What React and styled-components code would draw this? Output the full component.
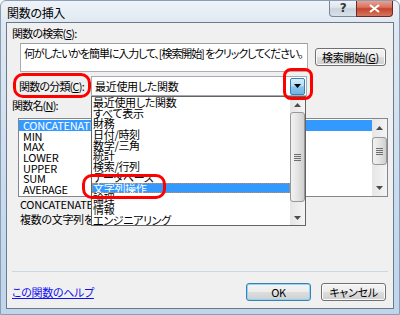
import React from 'react';
import styled, { createGlobalStyle } from 'styled-components';

const GlobalStyle = createGlobalStyle`
  html, body {
    margin: 0;
    padding: 0;
    background: #ffffff;
  }
  body {
    font-family: 'Noto Sans CJK JP', 'Noto Sans', sans-serif;
    font-size: 11px;
    font-feature-settings: 'palt';
    letter-spacing: -0.3px;
    color: #000;
  }
`;

const Window = styled.div`
  width: 400px;
  height: 315px;
  box-sizing: border-box;
  display: flex;
  flex-direction: column;
  border-radius: 6px 6px 0 0;
  border: 1px solid #8a9db2;
  background: linear-gradient(180deg, #eef3f8 0px, #dfe8f2 22px, #c9dcef 60%, #bfd5ec 100%);
  overflow: hidden;
`;

const TitleBar = styled.div`
  height: 21px;
  display: flex;
  align-items: flex-start;
  padding-left: 6px;
`;

const Title = styled.div`
  font-size: 12px;
  line-height: 14px;
  padding-top: 5px;
`;

const CaptionButtons = styled.div`
  margin-left: auto;
  margin-right: 6px;
  margin-top: -1px;
  display: flex;
`;

const CaptionButton = styled.div`
  width: ${p => p.$w}px;
  height: 17px;
  box-sizing: border-box;
  display: flex;
  align-items: center;
  justify-content: center;
  border: 1px solid ${p => (p.$close ? '#6d2a22' : '#7a8796')};
  border-top: none;
  border-radius: ${p => (p.$close ? '0 0 4px 0' : '0 0 0 4px')};
  margin-left: ${p => (p.$close ? '-1px' : '0')};
  background: ${p =>
    p.$close
      ? 'linear-gradient(180deg, #e9a99c 0%, #d8735f 45%, #c7432c 55%, #d5775f 100%)'
      : 'linear-gradient(180deg, #f2f5f9 0%, #dfe6ee 45%, #c9d3de 55%, #d8e0e8 100%)'};
  color: ${p => (p.$close ? '#fff' : '#333')};
  font-size: 12px;
  font-weight: bold;
  font-family: 'DejaVu Sans', sans-serif;
`;

const Client = styled.div`
  position: relative;
  flex: 1;
  margin: 0 5px 5px 5px;
  border: 1px solid #6a7a8a;
  background: #f0f0f0;
  padding: 0 5px 0 5px;
  display: flex;
  flex-direction: column;
`;

const Label = styled.div`
  height: 13px;
  line-height: 13px;
  letter-spacing: -0.8px;
  margin-top: ${p => p.$mt || 0}px;
  margin-left: ${p => p.$ml || 0}px;
  width: ${p => (p.$w ? `${p.$w}px` : 'auto')};
  flex-shrink: 0;
  white-space: nowrap;
`;

const Row = styled.div`
  display: flex;
  align-items: ${p => p.$align || 'flex-start'};
  margin-top: ${p => p.$mt || 0}px;
  padding-left: ${p => p.$pl || 0}px;
`;

const SearchBox = styled.div`
  width: 288px;
  height: 29px;
  box-sizing: border-box;
  border: 1px solid #abadb3;
  border-top-color: #9aa0a8;
  background: #fff;
  padding: 2px 3px;
  line-height: 14px;
  letter-spacing: -1.1px;
  white-space: nowrap;
  overflow: hidden;
`;

const PushButton = styled.div`
  width: ${p => p.$w}px;
  height: 18px;
  box-sizing: border-box;
  margin-top: ${p => p.$mt || 0}px;
  margin-left: ${p => p.$ml || 0}px;
  border: 1px solid ${p => (p.$primary ? '#3c7fb1' : '#707070')};
  border-radius: 3px;
  display: flex;
  align-items: center;
  justify-content: center;
  line-height: 14px;
  white-space: nowrap;
  background: linear-gradient(180deg, #f4f4f4 0%, #ececec 48%, #dddddd 52%, #cfcfcf 100%);
  box-shadow: ${p =>
    p.$primary ? 'inset 0 0 0 1px #8fd4f7' : 'inset 0 0 0 1px #fbfbfb'};
`;

const ComboWrap = styled.div`
  position: relative;
  width: 216px;
  height: 20px;
  box-sizing: border-box;
  border: 1px solid #a5acb5;
  background: #fff;
  display: flex;
  align-items: center;
`;

const ComboText = styled.div`
  flex: 1;
  padding-left: 3px;
  line-height: 14px;
  white-space: nowrap;
`;

const ComboButton = styled.div`
  width: 15px;
  height: 17px;
  box-sizing: border-box;
  margin-right: 1px;
  border: 1px solid #3c7fb1;
  border-radius: 2px;
  background: linear-gradient(180deg, #d6edfb 0%, #b2dcf5 45%, #86c4ec 55%, #6fb4e3 100%);
  display: flex;
  align-items: center;
  justify-content: center;
`;

const DropList = styled.div`
  position: absolute;
  top: 19px;
  left: -1px;
  width: 215px;
  height: 130px;
  box-sizing: border-box;
  border: 1px solid #646464;
  background: #fff;
  display: flex;
  z-index: 5;
`;

const Items = styled.div`
  flex: 1;
  padding-top: ${p => p.$pt || 0}px;
  overflow: hidden;
`;

const Item = styled.div`
  height: 10.7px;
  line-height: 10.7px;
  padding-left: ${p => p.$pl}px;
  white-space: nowrap;
  box-sizing: border-box;
  background: ${p => (p.$selected ? '#3399ff' : 'transparent')};
  color: ${p => (p.$selected ? '#fff' : '#000')};
  outline: ${p => (p.$focused ? '1px dotted #d98a3a' : 'none')};
  outline-offset: -1px;
`;

const FuncList = styled.div`
  width: 370px;
  height: 79px;
  box-sizing: border-box;
  margin-top: 6px;
  margin-left: 6px;
  border: 1px solid #828790;
  background: #fff;
  display: flex;
`;

const ScrollBar = styled.div`
  width: 15px;
  flex-shrink: 0;
  display: flex;
  flex-direction: column;
  background: linear-gradient(90deg, #e6e6e6 0%, #f4f4f4 100%);
`;

const Arrow = styled.div`
  height: ${p => p.$size}px;
  flex-shrink: 0;
  display: flex;
  align-items: center;
  justify-content: center;
`;

const Thumb = styled.div`
  margin: ${p => p.$mt}px 0 0 0;
  height: ${p => p.$h}px;
  box-sizing: border-box;
  border: 1px solid #979797;
  border-radius: 3px;
  background: linear-gradient(90deg, #f2f2f2 0%, #e4e4e4 50%, #cfcfcf 100%);
  display: flex;
  align-items: center;
  justify-content: center;
  flex-shrink: 0;
`;

const Grip = styled.div`
  width: 7px;
  height: 7px;
  background: repeating-linear-gradient(180deg, #6d6d6d 0px, #6d6d6d 1px, transparent 1px, transparent 2px);
`;

const Filler = styled.div`
  flex: 1;
`;

const Description = styled.div`
  margin-left: 8px;
  margin-top: 0px;
  line-height: 15px;
  white-space: nowrap;
`;

const Separator = styled.div`
  height: 1px;
  margin-top: 44px;
  background: #cbd7e2;
`;

const BottomRow = styled.div`
  display: flex;
  align-items: center;
  margin-top: 11px;
  padding-right: 2px;
`;

const HelpLink = styled.a`
  color: #1010ee;
  text-decoration: underline;
  line-height: 14px;
  margin-right: auto;
`;

const Ring = styled.div`
  position: absolute;
  left: ${p => p.$x}px;
  top: ${p => p.$y}px;
  width: ${p => p.$w}px;
  height: ${p => p.$h}px;
  box-sizing: border-box;
  border: 3px solid #ff0000;
  border-radius: ${p => p.$r || 10}px;
  z-index: 10;
  pointer-events: none;
`;

const Tri = ({ up, color = '#4d4d4d', w = 7, h = 4 }) => (
  <svg width={w} height={h} viewBox={`0 0 ${w} ${h}`}>
    <polygon
      points={up ? `0,${h} ${w / 2},0 ${w},${h}` : `0,0 ${w},0 ${w / 2},${h}`}
      fill={color}
    />
  </svg>
);

const Scroll = ({ arrow, thumbTop, thumbHeight }) => (
  <ScrollBar>
    <Arrow $size={arrow}>
      <Tri up />
    </Arrow>
    <Thumb $mt={thumbTop} $h={thumbHeight}>
      <Grip />
    </Thumb>
    <Filler />
    <Arrow $size={arrow}>
      <Tri />
    </Arrow>
  </ScrollBar>
);

const categories = [
  '最近使用した関数',
  'すべて表示',
  '財務',
  '日付/時刻',
  '数学/三角',
  '統計',
  '検索/行列',
  'データベース',
  '文字列操作',
  '論理',
  '情報',
  'エンジニアリング'
];

const functions = ['CONCATENATE', 'MIN', 'MAX', 'LOWER', 'UPPER', 'SUM', 'AVERAGE'];

export default function App() {
  return (
    <>
      <GlobalStyle />
      <Window>
        <TitleBar>
          <Title>関数の挿入</Title>
          <CaptionButtons>
            <CaptionButton $w={28}>?</CaptionButton>
            <CaptionButton $w={37} $close>
              <svg width="11" height="9" viewBox="0 0 11 9">
                <path d="M1 1 L10 8 M10 1 L1 8" stroke="#fff" strokeWidth="2.2" />
              </svg>
            </CaptionButton>
          </CaptionButtons>
        </TitleBar>
        <Client>
          <Label $mt={4}>関数の検索(<u>S</u>):</Label>
          <Row $mt={3} $pl={8}>
            <SearchBox>何がしたいかを簡単に入力して、[検索開始] をクリックしてください。</SearchBox>
            <PushButton $w={71} $mt={5} $ml={7}>検索開始(<u>G</u>)</PushButton>
          </Row>
          <Row $mt={4} $align="center">
            <Label $ml={7} $w={72}>関数の分類(<u>C</u>):</Label>
            <ComboWrap>
              <ComboText>最近使用した関数</ComboText>
              <ComboButton>
                <Tri color="#000" w={7} h={4} />
              </ComboButton>
              <DropList>
                <Items>
                  {categories.map(c => (
                    <Item
                      key={c}
                      $pl={1}
                      $selected={c === '文字列操作'}
                      $focused={c === '文字列操作'}
                    >
                      {c}
                    </Item>
                  ))}
                </Items>
                <Scroll arrow={15} thumbTop={0} thumbHeight={90} />
              </DropList>
            </ComboWrap>
          </Row>
          <Label $mt={3}>関数名(<u>N</u>):</Label>
          <FuncList>
            <Items $pt={1}>
              {functions.map(f => (
                <Item key={f} $pl={4} $selected={f === 'CONCATENATE'}>
                  {f}
                </Item>
              ))}
            </Items>
            <Scroll arrow={17} thumbTop={1} thumbHeight={28} />
          </FuncList>
          <Description>
            CONCATENATE(文字列1,文字列2,...)
            <br />
            複数の文字列を結合して1つの文字列にまとめます。
          </Description>
          <Separator />
          <BottomRow>
            <HelpLink>この関数のヘルプ</HelpLink>
            <PushButton $w={65} $primary>OK</PushButton>
            <PushButton $w={65} $ml={10}>キャンセル</PushButton>
          </BottomRow>
          <Ring $x={6} $y={50} $w={78} $h={25} $r={10} />
          <Ring $x={276} $y={45} $w={30} $h={32} $r={8} />
          <Ring $x={75} $y={151} $w={84} $h={25} $r={10} />
        </Client>
      </Window>
    </>
  );
}
